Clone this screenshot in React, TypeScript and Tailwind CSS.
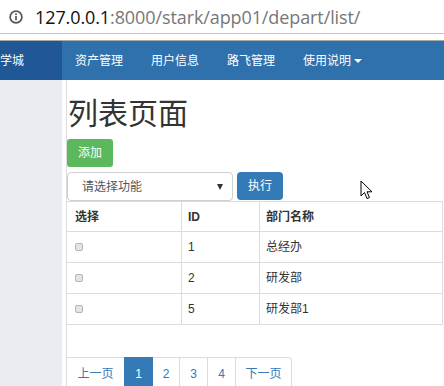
export default function App() {
  const rows = [
    { id: "1", name: "总经办" },
    { id: "2", name: "研发部" },
    { id: "5", name: "研发部1" },
  ];

  return (
    <div
      className="relative w-[444px] h-[386px] overflow-hidden bg-white flex flex-col text-[#333]"
      style={{ fontFamily: '"Liberation Sans", "Noto Sans CJK SC", sans-serif' }}
    >
      {/* ADDRESS BAR */}
      <div className="h-[34px] shrink-0 border-b border-[#c4c4c4] flex items-center">
        <svg width="14" height="14" viewBox="0 0 14 14" className="ml-[9px]">
          <circle cx="7" cy="7" r="5.9" fill="none" stroke="#555" strokeWidth="1.7" />
          <rect x="6.15" y="6" width="1.7" height="4.3" fill="#555" />
          <rect x="6.15" y="3.4" width="1.7" height="1.7" fill="#555" />
        </svg>
        <div
          className="ml-[12px] text-[18px] leading-none tracking-[-0.1px]"
          style={{ fontFamily: '"Open Sans", sans-serif' }}
        >
          <span className="text-[#111]">127.0.0.1</span>
          <span className="text-[#777]">:8000/stark/app01/depart/list/</span>
        </div>
      </div>
      <div className="h-[6px] shrink-0" />

      {/* NAVBAR */}
      <div className="h-[40px] shrink-0 border-t border-[#a9a9a9] bg-[#2f71ad] flex text-white text-[12px]">
        <div className="w-[62px] bg-[#1f5797] flex items-center">
          <span className="text-[12px] whitespace-nowrap">学城</span>
        </div>
        <div className="flex items-center ml-[13px] gap-[28px]">
          <span>资产管理</span>
          <span>用户信息</span>
          <span>路飞管理</span>
          <span className="flex items-center">
            使用说明
            <span className="ml-[3px] w-0 h-0 border-l-[4px] border-r-[4px] border-t-[4px] border-l-transparent border-r-transparent border-t-white" />
          </span>
        </div>
      </div>

      {/* BODY */}
      <div className="flex flex-1">
        <div className="w-[62px] bg-[#ebecf1]" />
        <div className="flex-1 pl-[4px]">
          <div className="h-full border-l border-[#dcdcdc] flex flex-col">
            <h1 className="mt-[17px] ml-[1px] h-[34px] leading-[34px] text-[30px] text-[#333]">列表页面</h1>

            <div className="mt-[8px]">
              <button className="h-[28px] w-[46px] rounded-[3px] bg-[#5cb85c] text-white text-[12px]">添加</button>
            </div>

            <div className="mt-[5px] flex items-start">
              <div className="w-[166px] h-[29px] border border-[#cfcfcf] rounded-[4px] flex items-center justify-between pl-[14px] pr-[9px] text-[12px] text-[#555]">
                <span>请选择功能</span>
                <span className="w-0 h-0 border-l-[3.5px] border-r-[3.5px] border-t-[6px] border-l-transparent border-r-transparent border-t-[#333]" />
              </div>
              <button className="ml-[4px] h-[28px] w-[46px] rounded-[4px] bg-[#337ab7] text-white text-[12px]">执行</button>
            </div>

            {/* TABLE */}
            <div className="w-[376px] border-t border-[#dcdcdc] text-[12px]">
              <div className="grid grid-cols-[115px_78px_183px] h-[30px] border-b border-[#dcdcdc] font-semibold text-[#333]">
                <div className="border-r border-[#dcdcdc] flex items-center pl-[8px]">选择</div>
                <div className="border-r border-[#dcdcdc] flex items-center pl-[6px]">ID</div>
                <div className="border-r border-[#dcdcdc] flex items-center pl-[6px]">部门名称</div>
              </div>
              {rows.map((r) => (
                <div key={r.id} className="grid grid-cols-[115px_78px_183px] h-[31px] border-b border-[#dcdcdc]">
                  <div className="border-r border-[#dcdcdc] flex items-center pl-[8px]">
                    <span className="w-[8px] h-[8px] rounded-[2px] border border-[#b5b5b5] bg-[#e4e4e4]" />
                  </div>
                  <div className="border-r border-[#dcdcdc] flex items-center pl-[6px]">{r.id}</div>
                  <div className="border-r border-[#dcdcdc] flex items-center pl-[6px]">{r.name}</div>
                </div>
              ))}
            </div>

            {/* PAGINATION */}
            <div className="mt-[32px] flex text-[12px] text-[#337ab7]">
              <div className="w-[57px] h-[32px] border-t border-[#dcdcdc] flex items-center justify-center">上一页</div>
              <div className="w-[29px] h-[32px] border-t border-[#337ab7] bg-[#337ab7] text-white flex items-center justify-center">1</div>
              <div className="w-[26px] h-[32px] border-t border-[#dcdcdc] flex items-center justify-center">2</div>
              <div className="w-[28px] h-[32px] border-t border-l border-[#dcdcdc] flex items-center justify-center">3</div>
              <div className="w-[28px] h-[32px] border-t border-l border-[#dcdcdc] flex items-center justify-center">4</div>
              <div className="w-[57px] h-[32px] border-t border-x border-[#dcdcdc] rounded-tr-[4px] flex items-center justify-center">下一页</div>
            </div>
          </div>
        </div>
      </div>

      {/* MOUSE CURSOR */}
      <svg width="14" height="21" viewBox="0 0 14 21" className="absolute left-[360px] top-[180px]">
        <path d="M1 1 L1 16 L4.5 12.5 L7 18.5 L9.5 17.5 L7 11.8 L12 11.8 Z" fill="#fff" stroke="#000" strokeWidth="1" strokeLinejoin="round" />
      </svg>
    </div>
  );
}
